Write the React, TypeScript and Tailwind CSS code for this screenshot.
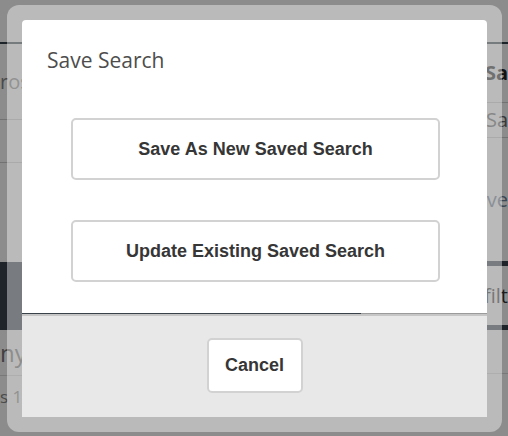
import React from 'react';

function PageBehind() {
  return (
    <div className="flex h-full w-full bg-white text-[#666]">
      <div className="flex w-[254px] flex-col">
        <div className="h-[44px] shrink-0 border-b-2 border-[#33414b]" />
        <div className="flex h-[76px] shrink-0 items-center border-b border-[#cfcfcf] text-[20px] text-[#888]">
          <span>ros</span>
        </div>
        <div className="h-[43px] shrink-0 border-b border-[#cfcfcf]" />
        <div className="h-[99px] shrink-0" />
        <div className="h-[68px] shrink-0 bg-[#37434d]" />
        <div className="flex h-[46px] shrink-0 items-center border-b border-[#dcdcdc] text-[24px] text-[#777]">
          <span>ny</span>
        </div>
        <div className="flex h-[42px] shrink-0 items-center text-[17px] text-[#888]">
          <span>s 1</span>
        </div>
      </div>
      <div className="flex flex-1 flex-col">
        <div className="h-[44px] w-full shrink-0 border-b-2 border-[#33414b]" />
        <div className="flex h-[59px] w-full shrink-0 items-center justify-end border-b border-[#cfcfcf] text-[20px] font-bold text-[#222]">
          <span>Sa</span>
        </div>
        <div className="flex h-[35px] w-full shrink-0 items-center justify-end border-b border-[#cfcfcf] text-[20px]">
          <span>(Sa</span>
        </div>
        <div className="flex h-[123px] w-full shrink-0 items-center justify-end text-[20px] text-[#6d7f95]">
          <span>ve</span>
        </div>
        <div className="flex h-[69px] w-full shrink-0 items-center justify-end border-y-[5px] border-[#37434d] text-[20px] text-[#333]">
          <span>filt</span>
        </div>
        <div className="h-[44px] w-full shrink-0 border-b border-[#dcdcdc]" />
      </div>
    </div>
  );
}

function ModalButton({ label }: { label: string }) {
  return (
    <button className="flex h-[62px] w-[369px] items-center justify-center rounded-[5px] border-2 border-[#d2d2d2] bg-white font-['Liberation_Sans',Arial,sans-serif] text-[18px] font-bold text-[#363636]">
      {label}
    </button>
  );
}

export default function App() {
  return (
    <div className="relative h-[436px] w-[508px] overflow-hidden font-['Open_Sans',sans-serif]">
      <PageBehind />

      <div className="absolute inset-0 flex items-start justify-start bg-black/45 pl-[7px] pt-[5px]">
        <div className="h-[427px] w-[495px] rounded-[12px] bg-white/40 p-[15px]">
          <div className="flex h-full flex-col overflow-hidden rounded-t-[4px] bg-white">
            <div className="flex h-[293px] shrink-0 flex-col">
              <h2 className="pl-[25px] pt-[26px] text-[21px] leading-[29px] text-[#4d4d4d]">Save Search</h2>
              <div className="mt-[43px] flex flex-col gap-[40px] pl-[49px]">
                <ModalButton label="Save As New Saved Search" />
                <ModalButton label="Update Existing Saved Search" />
              </div>
            </div>

            <div className="flex h-px shrink-0">
              <div className="w-[339px] bg-[#3a4249]" />
              <div className="flex-1 bg-[#9b9b9b]" />
            </div>
            <div className="h-[2px] shrink-0 bg-[#c6c6c6]" />

            <div className="flex flex-1 justify-center bg-[#e8e8e8] pt-[22px]">
              <button className="h-[55px] w-[96px] rounded-[5px] border-2 border-[#d2d2d2] bg-white font-['Liberation_Sans',Arial,sans-serif] text-[18px] font-bold text-[#363636]">
                Cancel
              </button>
            </div>
          </div>
        </div>
      </div>
    </div>
  );
}
